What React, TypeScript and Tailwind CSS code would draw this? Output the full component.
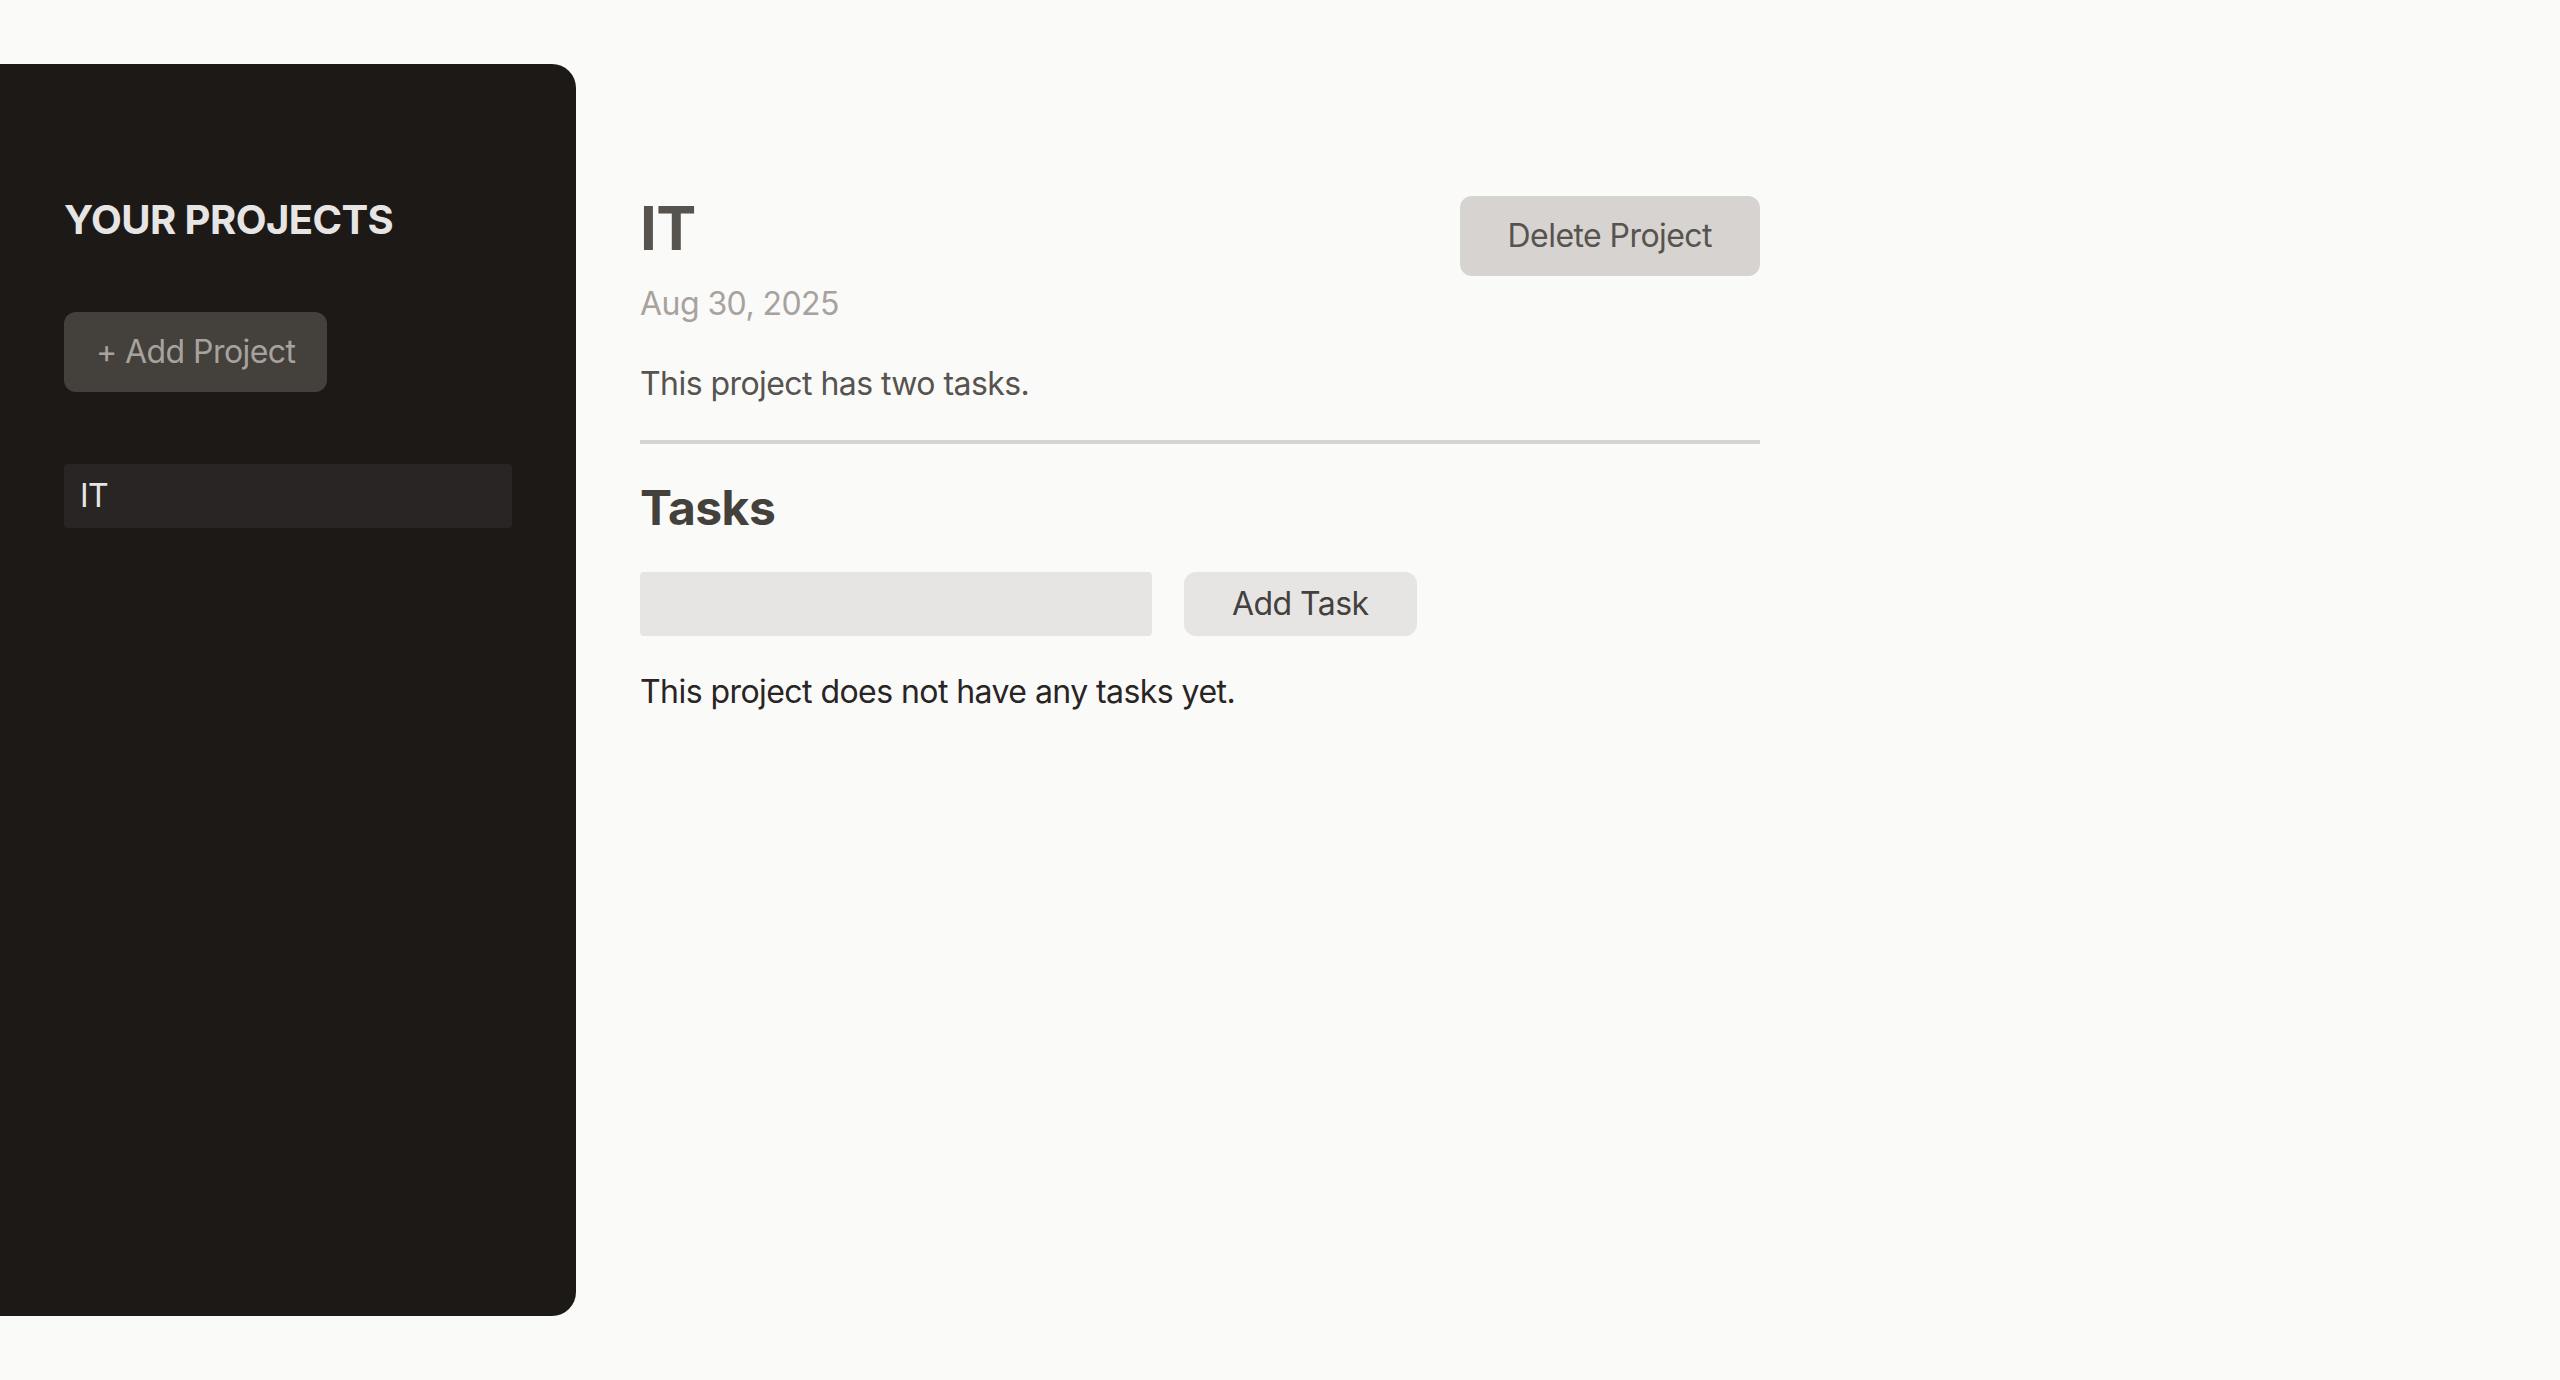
import React, { useState } from 'react';

type Project = {
  id: number;
  title: string;
  description: string;
  dueDate: string;
};

const projects: Project[] = [
  { id: 1, title: 'IT', description: 'This project has two tasks.', dueDate: '2025-08-30' },
];

const formatDate = (d: string) =>
  new Date(d + 'T00:00:00').toLocaleDateString('en-US', { year: 'numeric', month: 'short', day: 'numeric' });

const Sidebar = ({ selectedId, onSelect }: { selectedId: number; onSelect: (id: number) => void }) => (
  <aside className="w-[576px] shrink-0 px-16 py-32 bg-[#1c1917] text-[#fafaf9] rounded-r-[24px]">
    <h2 className="mb-16 font-bold uppercase text-[40px] leading-[56px] text-[#e7e5e4]">Your Projects</h2>
    <div>
      <button className="px-8 py-4 text-[32px] leading-[48px] rounded-[12px] bg-[#44403c] text-[#a8a29e] hover:bg-[#57534e] hover:text-[#f5f5f4]">
        + Add Project
      </button>
    </div>
    <ul className="mt-16">
      {projects.map((p) => (
        <li key={p.id}>
          <button
            onClick={() => onSelect(p.id)}
            className={
              'w-full text-left px-4 py-2 my-2 rounded-[4px] text-[32px] leading-[48px] ' +
              (p.id === selectedId ? 'bg-[#292524] text-[#e7e5e4]' : 'text-[#a8a29e]')
            }
          >
            {p.title}
          </button>
        </li>
      ))}
    </ul>
  </aside>
);

const Tasks = () => {
  const [text, setText] = useState('');
  const [tasks, setTasks] = useState<string[]>([]);

  const addTask = () => {
    if (!text.trim()) return;
    setTasks([...tasks, text]);
    setText('');
  };

  return (
    <section>
      <h2 className="text-[48px] leading-[64px] font-bold text-[#44403c] mb-8">Tasks</h2>
      <div className="flex items-center gap-8">
        <input
          value={text}
          onChange={(e) => setText(e.target.value)}
          className="w-[512px] px-4 py-2 rounded-[4px] bg-[#e7e5e4] text-[32px] leading-[48px] outline-none"
        />
        <button onClick={addTask} className="px-12 py-2 rounded-[12px] bg-[#e7e5e4] text-[#44403c] text-[32px] leading-[48px] hover:text-[#0c0a09]">
          Add Task
        </button>
      </div>
      {tasks.length === 0 ? (
        <p className="text-[#292524] my-8 text-[32px] leading-[48px]">This project does not have any tasks yet.</p>
      ) : (
        <ul className="p-8 mt-16 rounded-[12px] bg-[#f5f5f4]">
          {tasks.map((t, i) => (
            <li key={i} className="flex justify-between my-8 text-[32px] leading-[48px]">{t}</li>
          ))}
        </ul>
      )}
    </section>
  );
};

export default function App() {
  const [selectedId, setSelectedId] = useState(1);
  const project = projects.find((p) => p.id === selectedId)!;

  return (
    <main
      className="h-screen py-16 flex gap-16 bg-[#fafaf9] tracking-[-0.035em]"
      style={{ fontFamily: 'Inter, "Noto Sans", "Liberation Sans", sans-serif' }}
    >
      <Sidebar selectedId={selectedId} onSelect={setSelectedId} />
      <div className="w-[1120px] mt-32">
        <header className="pb-8 mb-8 border-b-4 border-[#d6d3d1]">
          <div className="flex items-center justify-between">
            <h1 className="text-[60px] leading-[72px] font-bold text-[#57534e] mb-4">{project.title}</h1>
            <button className="px-12 py-4 rounded-[12px] bg-[#d6d3d1] text-[#57534e] text-[32px] leading-[48px] hover:text-[#0c0a09]">
              Delete Project
            </button>
          </div>
          <p className="mb-8 text-[#a8a29e] text-[32px] leading-[48px]">{formatDate(project.dueDate)}</p>
          <p className="text-[#57534e] whitespace-pre-wrap text-[32px] leading-[48px]">{project.description}</p>
        </header>
        <Tasks />
      </div>
    </main>
  );
}
